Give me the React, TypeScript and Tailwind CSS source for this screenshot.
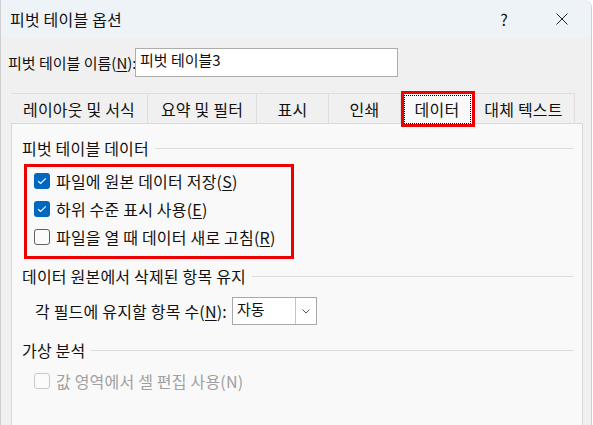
import React from 'react'

const font = "font-['Noto_Sans_CJK_KR','Noto_Sans',sans-serif]"

function Key({ k }: { k: string }) {
  return (
    <span>
      (<span className="underline underline-offset-2">{k}</span>)
    </span>
  )
}

function Check({ checked, disabled }: { checked?: boolean; disabled?: boolean }) {
  if (checked) {
    return (
      <span className="w-4 h-4 shrink-0 rounded-[3px] bg-[#0067c0] flex items-center justify-center">
        <svg width="10" height="8" viewBox="0 0 10 8">
          <path d="M1.2 4.2l2.4 2.3L8.8 1.3" stroke="white" strokeWidth="1.2" fill="none" />
        </svg>
      </span>
    )
  }
  return (
    <span
      className={
        disabled
          ? 'w-4 h-4 shrink-0 rounded-[3px] border border-[#c9c9c9] bg-[#fbfbfb]'
          : 'w-4 h-4 shrink-0 rounded-[3px] border border-[#616161] bg-[#fbfbfb]'
      }
    />
  )
}

function CheckRow({ children, checked, disabled }: { children: React.ReactNode; checked?: boolean; disabled?: boolean }) {
  return (
    <div className="h-[28px] flex items-center whitespace-nowrap">
      <Check checked={checked} disabled={disabled} />
      <span className={disabled ? 'ml-[6px] text-[#a0a0a0]' : 'ml-[6px]'}>{children}</span>
    </div>
  )
}

function Section({ title }: { title: string }) {
  return (
    <div className="h-[20px] flex items-center whitespace-nowrap">
      <span>{title}</span>
      <div className="flex-1 h-px bg-[#dcdcdc] ml-[6px]" />
    </div>
  )
}

const tabs = [
  { label: '레이아웃 및 서식', w: 'w-[137px]' },
  { label: '요약 및 필터', w: 'w-[109px]' },
  { label: '표시', w: 'w-[72px]' },
  { label: '인쇄', w: 'w-[72px]' },
  { label: '데이터', w: 'w-[72px]', active: true },
  { label: '대체 텍스트', w: 'w-[102px]' },
]

export default function App() {
  return (
    <div className={`w-[593px] h-[425px] overflow-hidden bg-white text-[16px] leading-[20px] tracking-[0.2px] text-[#111] ${font}`}>
      <div className="w-[592px] h-[425px] rounded-tr-[8px] border-l border-r border-[#cfcfcf] bg-[#f0f0f0] overflow-hidden">
        {/* title bar */}
        <div className="h-[38px] bg-[#eef3f8] flex items-center pl-[9px]">
          <span>피벗 테이블 옵션</span>
          <span className="ml-auto mr-[48px] text-[16px]">?</span>
          <svg width="12" height="12" viewBox="0 0 12 12" className="mr-[23px]">
            <path d="M0.5 0.5l11 11M11.5 0.5l-11 11" stroke="#222" strokeWidth="1" />
          </svg>
        </div>

        {/* name row */}
        <div className="mt-[10px] h-[29px] flex items-center pl-[7px]">
          <span className="w-[127px] shrink-0 whitespace-nowrap text-[15px] tracking-normal">
            피벗 테이블 이름<Key k="N" />:
          </span>
          <div className="w-[263px] h-[29px] bg-white border border-[#adadad] pl-[4px] leading-[20px] pt-[1px] text-[15px] tracking-normal whitespace-nowrap">
            피벗 테이블3
          </div>
        </div>

        {/* tabs */}
        <div className="mt-[16px] ml-[10px] flex h-[30px]">
          {tabs.map((t) => (
            <div
              key={t.label}
              className={
                t.active
                  ? `${t.w} relative h-[31px] bg-[#f9f9f9] border-t border-x border-[#d9d9d9] flex items-center justify-center z-10 whitespace-nowrap`
                  : `${t.w} h-[30px] border-t border-r border-[#dedede] flex items-center justify-center whitespace-nowrap`
              }
            >
              {t.active && (
                <>
                  <div className="absolute left-[2px] right-[1px] top-[1px] bottom-0 border border-dotted border-black" />
                  <div className="absolute -left-[1px] -top-[3px] w-[74px] h-[36px] border-[3px] border-[#ee0000]" />
                </>
              )}
              <span>{t.label}</span>
            </div>
          ))}
        </div>

        {/* panel */}
        <div className="ml-[10px] w-[572px] h-[400px] bg-[#f9f9f9] border border-[#d9d9d9] pl-[10px] pr-[8px] pt-[14px]">
          <Section title="피벗 테이블 데이터" />
          <div className="mt-[6px] ml-[2px] w-[270px] h-[95px] border-[3px] border-[#ee0000] pl-[7px] pb-[5px]">
            <CheckRow checked>
              파일에 원본 데이터 저장<Key k="S" />
            </CheckRow>
            <CheckRow checked>
              하위 수준 표시 사용<Key k="E" />
            </CheckRow>
            <CheckRow>
              파일을 열 때 데이터 새로 고침<Key k="R" />
            </CheckRow>
          </div>

          <div className="mt-[7px]">
            <Section title="데이터 원본에서 삭제된 항목 유지" />
          </div>
          <div className="mt-[11px] ml-[13px] flex items-center">
            <span className="w-[197px] shrink-0 whitespace-nowrap">
              각 필드에 유지할 항목 수<Key k="N" />:
            </span>
            <div className="w-[85px] h-[28px] bg-white border border-[#a8a8a8] flex">
              <div className="flex-1 pl-[4px] leading-[22px] text-[15px] tracking-normal">자동</div>
              <div className="w-[21px] border-l border-[#c4c4c4] flex items-center justify-center">
                <svg width="8" height="5" viewBox="0 0 8 5">
                  <path d="M0.5 0.5L4 4l3.5-3.5" stroke="#555" strokeWidth="1" fill="none" />
                </svg>
              </div>
            </div>
          </div>

          <div className="mt-[15px]">
            <Section title="가상 분석" />
          </div>
          <div className="mt-[7px] ml-[12px]">
            <CheckRow disabled>값 영역에서 셀 편집 사용(N)</CheckRow>
          </div>
        </div>
      </div>
    </div>
  )
}
